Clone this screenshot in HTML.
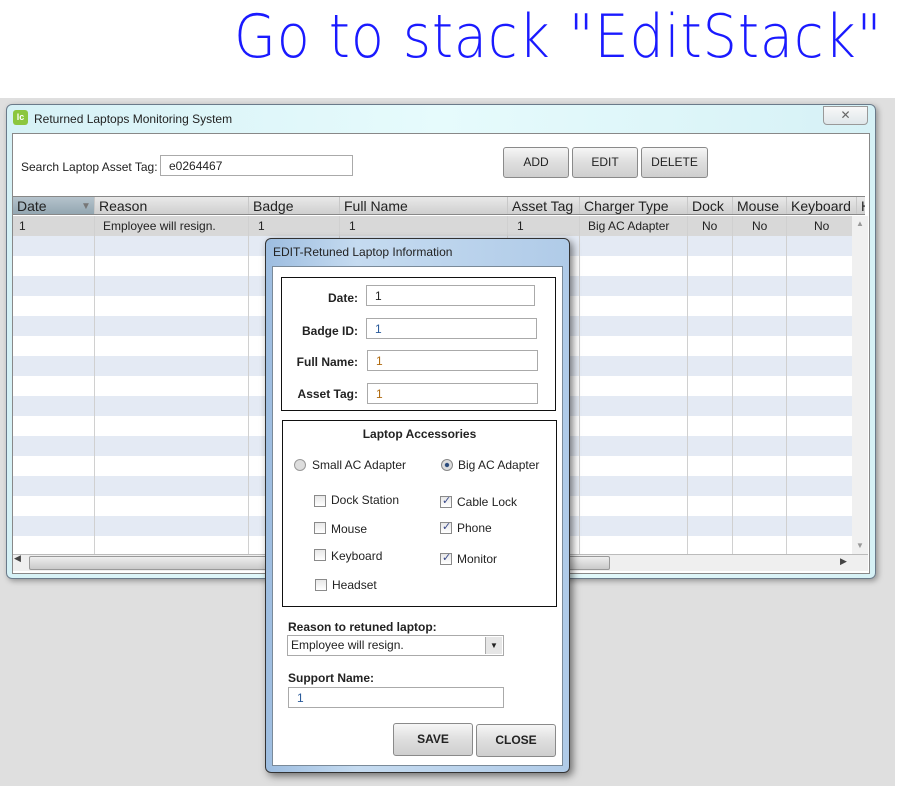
<!DOCTYPE html>
<html><head><meta charset="utf-8"><style>
*{box-sizing:border-box;margin:0;padding:0}
body{width:906px;height:786px;position:relative;background:#fff;font-family:"Liberation Sans",sans-serif;font-size:12px;color:#222;overflow:hidden}
.a{position:absolute}
.hand{left:234px;top:2px;font-family:"DejaVu Sans",sans-serif;font-size:60px;color:#1a1aff;font-weight:200;white-space:nowrap;transform:scaleX(0.9);transform-origin:left;letter-spacing:1px}
.th{position:absolute;top:0;height:19px;line-height:19px;font-size:14px;color:#222;padding-left:4px;border-right:1px solid #c8c8c8}
.td{position:absolute;height:20px;line-height:20px;font-size:12px}
.btn{position:absolute;border:1px solid #8a8a8a;border-radius:3px;background:linear-gradient(#f6f6f6,#dedede 50%,#cfcfcf);text-align:center;font-size:12px}
.inp{position:absolute;border:1px solid #aaa;background:#fff;height:21px;line-height:21px;padding-left:8px;font-size:12px}
.lbl{position:absolute;font-weight:bold;font-size:12px;text-align:right}
.cb{position:absolute;width:12px;height:12px;border:1px solid #8a8a8a;background:linear-gradient(#e8e8e8,#fff)}
.cb.on::after{content:"✓";position:absolute;left:1px;top:-3px;font-size:11px;color:#3a4a8a}
.ct{position:absolute;font-size:12px;color:#222}
</style></head><body>
<div class="a hand">Go to stack "EditStack"</div>
<div class="a" style="left:0;top:98px;width:895px;height:688px;background:#dfdfdf"></div>

<div class="a" style="left:6px;top:104px;width:870px;height:475px;border:1px solid #6a7a8a;border-radius:6px;background:linear-gradient(90deg,#d6f1f6,#e6fbfc 50%,#d6f1f6);box-shadow:2px 2px 6px rgba(0,0,0,.35)"></div>
<div class="a" style="left:13px;top:110px;width:15px;height:15px;background:#8cc63e;border-radius:3px;color:#fff;font-size:9px;font-weight:bold;line-height:14px;text-align:center">lc</div>
<div class="a" style="left:34px;top:112px;font-size:12px">Returned Laptops Monitoring System</div>
<div class="a" style="left:823px;top:106px;width:45px;height:19px;border:1px solid #999;border-radius:0 0 4px 4px;background:linear-gradient(#f8f8f8,#dfe7ea);text-align:center;color:#666;font-size:12px;line-height:17px">✕</div>

<div class="a" style="left:12px;top:133px;width:858px;height:441px;background:#fff;border:1px solid #888"></div>
<div class="a" style="left:21px;top:160px;font-size:12px">Search Laptop Asset Tag:</div>
<div class="inp" style="left:160px;top:155px;width:193px;height:21px;font-size:12px">e0264467</div>
<div class="btn" style="left:503px;top:147px;width:66px;height:31px;line-height:29px">ADD</div>
<div class="btn" style="left:572px;top:147px;width:66px;height:31px;line-height:29px">EDIT</div>
<div class="btn" style="left:641px;top:147px;width:67px;height:31px;line-height:29px">DELETE</div>

<div class="a" style="left:13px;top:196px;width:852px;height:19px;background:linear-gradient(#e9e9e9,#cfcfcf);border-top:1px solid #888;border-bottom:1px solid #888;overflow:hidden">
<div class="th" style="left:0;width:82px;background:linear-gradient(#b5c3cc,#8fa3ae)">Date<span style="position:absolute;left:68px;color:#777;font-size:10px">▼</span></div>
<div class="th" style="left:82px;width:154px">Reason</div>
<div class="th" style="left:236px;width:91px">Badge</div>
<div class="th" style="left:327px;width:168px">Full Name</div>
<div class="th" style="left:495px;width:72px">Asset Tag</div>
<div class="th" style="left:567px;width:108px">Charger Type</div>
<div class="th" style="left:675px;width:45px">Dock</div>
<div class="th" style="left:720px;width:54px">Mouse</div>
<div class="th" style="left:774px;width:70px">Keyboard</div>
<div class="th" style="left:844px;width:20px">H</div>
</div>
<div class="a" style="left:13px;top:216px;width:839px;height:338px;background:repeating-linear-gradient(#fff 0 0,#e4eaf4 0 20px,#fff 20px 40px);background-position:0 20px"></div>
<div class="a" style="left:13px;top:216px;width:839px;height:20px;background:#d8d8d8"></div>
<div class="a" style="left:94px;top:216px;width:1px;height:338px;background:#d0d0d0"></div>
<div class="a" style="left:248px;top:216px;width:1px;height:338px;background:#d0d0d0"></div>
<div class="a" style="left:339px;top:216px;width:1px;height:338px;background:#d0d0d0"></div>
<div class="a" style="left:507px;top:216px;width:1px;height:338px;background:#d0d0d0"></div>
<div class="a" style="left:579px;top:216px;width:1px;height:338px;background:#d0d0d0"></div>
<div class="a" style="left:687px;top:216px;width:1px;height:338px;background:#d0d0d0"></div>
<div class="a" style="left:732px;top:216px;width:1px;height:338px;background:#d0d0d0"></div>
<div class="a" style="left:786px;top:216px;width:1px;height:338px;background:#d0d0d0"></div>
<div class="td" style="left:19px;top:216px">1</div>
<div class="td" style="left:103px;top:216px">Employee will resign.</div>
<div class="td" style="left:258px;top:216px">1</div>
<div class="td" style="left:349px;top:216px">1</div>
<div class="td" style="left:517px;top:216px">1</div>
<div class="td" style="left:588px;top:216px">Big AC Adapter</div>
<div class="td" style="left:702px;top:216px">No</div>
<div class="td" style="left:752px;top:216px">No</div>
<div class="td" style="left:814px;top:216px">No</div>
<div class="a" style="left:852px;top:216px;width:16px;height:338px;background:#f0f0f0;color:#999;font-size:8px;text-align:center;line-height:16px">▲<div style="position:absolute;bottom:0;width:16px">▼</div></div>
<div class="a" style="left:13px;top:554px;width:855px;height:17px;background:#efefef;border-top:1px solid #bbb"></div>
<div class="a" style="left:14px;top:553px;font-size:9px;color:#444">◀</div>
<div class="a" style="left:29px;top:556px;width:581px;height:14px;border:1px solid #999;border-radius:2px;background:linear-gradient(#eee,#c9c9c9)"></div>
<div class="a" style="left:840px;top:556px;font-size:9px;color:#444">▶</div>

<div class="a" style="left:265px;top:238px;width:305px;height:535px;border:1px solid #333;border-radius:6px;background:linear-gradient(90deg,#9dbde0,#c5dbf0 30%,#b0cbe8);box-shadow:3px 3px 8px rgba(0,0,0,.5)"></div>
<div class="a" style="left:273px;top:245px;font-size:12px">EDIT-Retuned Laptop Information</div>
<div class="a" style="left:272px;top:266px;width:291px;height:500px;background:#fff;border:1px solid #7a8a99"></div>
<div class="a" style="left:281px;top:277px;width:275px;height:134px;border:1px solid #111"></div>
<div class="lbl" style="left:280px;top:291px;width:78px">Date:</div>
<div class="inp" style="left:366px;top:285px;width:169px;height:21px">1</div>
<div class="lbl" style="left:280px;top:324px;width:78px">Badge ID:</div>
<div class="inp" style="left:366px;top:318px;width:171px;height:21px;color:#2a5a9a">1</div>
<div class="lbl" style="left:280px;top:355px;width:78px">Full Name:</div>
<div class="inp" style="left:367px;top:350px;width:171px;height:21px;color:#b06a10">1</div>
<div class="lbl" style="left:280px;top:387px;width:78px">Asset Tag:</div>
<div class="inp" style="left:367px;top:383px;width:171px;height:21px;color:#b06a10">1</div>

<div class="a" style="left:282px;top:420px;width:275px;height:187px;border:1px solid #111"></div>
<div class="a" style="left:282px;top:427px;width:275px;text-align:center;font-weight:bold;font-size:12px">Laptop Accessories</div>
<div class="a" style="left:294px;top:459px;width:12px;height:12px;border-radius:50%;border:1px solid #999;background:#ddd"></div>
<div class="ct" style="left:312px;top:458px">Small AC Adapter</div>
<div class="a" style="left:441px;top:459px;width:12px;height:12px;border-radius:50%;border:1px solid #888;background:radial-gradient(#2a4a7a 25%,#ddd 35%)"></div>
<div class="ct" style="left:458px;top:458px">Big AC Adapter</div>
<div class="cb" style="left:314px;top:495px"></div><div class="ct" style="left:331px;top:493px">Dock Station</div>
<div class="cb" style="left:314px;top:522px"></div><div class="ct" style="left:331px;top:522px">Mouse</div>
<div class="cb" style="left:314px;top:549px"></div><div class="ct" style="left:331px;top:549px">Keyboard</div>
<div class="cb" style="left:315px;top:579px"></div><div class="ct" style="left:332px;top:578px">Headset</div>
<div class="cb on" style="left:440px;top:496px"></div><div class="ct" style="left:457px;top:495px">Cable Lock</div>
<div class="cb on" style="left:440px;top:522px"></div><div class="ct" style="left:457px;top:521px">Phone</div>
<div class="cb on" style="left:440px;top:553px"></div><div class="ct" style="left:457px;top:552px">Monitor</div>

<div class="lbl" style="left:288px;top:620px;text-align:left">Reason to retuned laptop:</div>
<div class="inp" style="left:287px;top:635px;width:217px;height:21px;padding-left:3px;line-height:19px">Employee will resign.<div style="position:absolute;right:1px;top:1px;width:17px;height:17px;border-left:1px solid #aaa;background:#e6e6e6;font-size:8px;text-align:center;line-height:17px">▼</div></div>
<div class="lbl" style="left:288px;top:671px;text-align:left">Support Name:</div>
<div class="inp" style="left:288px;top:687px;width:216px;height:21px;color:#2a5a9a">1</div>
<div class="btn" style="left:393px;top:723px;width:80px;height:33px;line-height:31px;font-weight:bold">SAVE</div>
<div class="btn" style="left:476px;top:724px;width:80px;height:33px;line-height:31px;font-weight:bold">CLOSE</div>
</body></html>
